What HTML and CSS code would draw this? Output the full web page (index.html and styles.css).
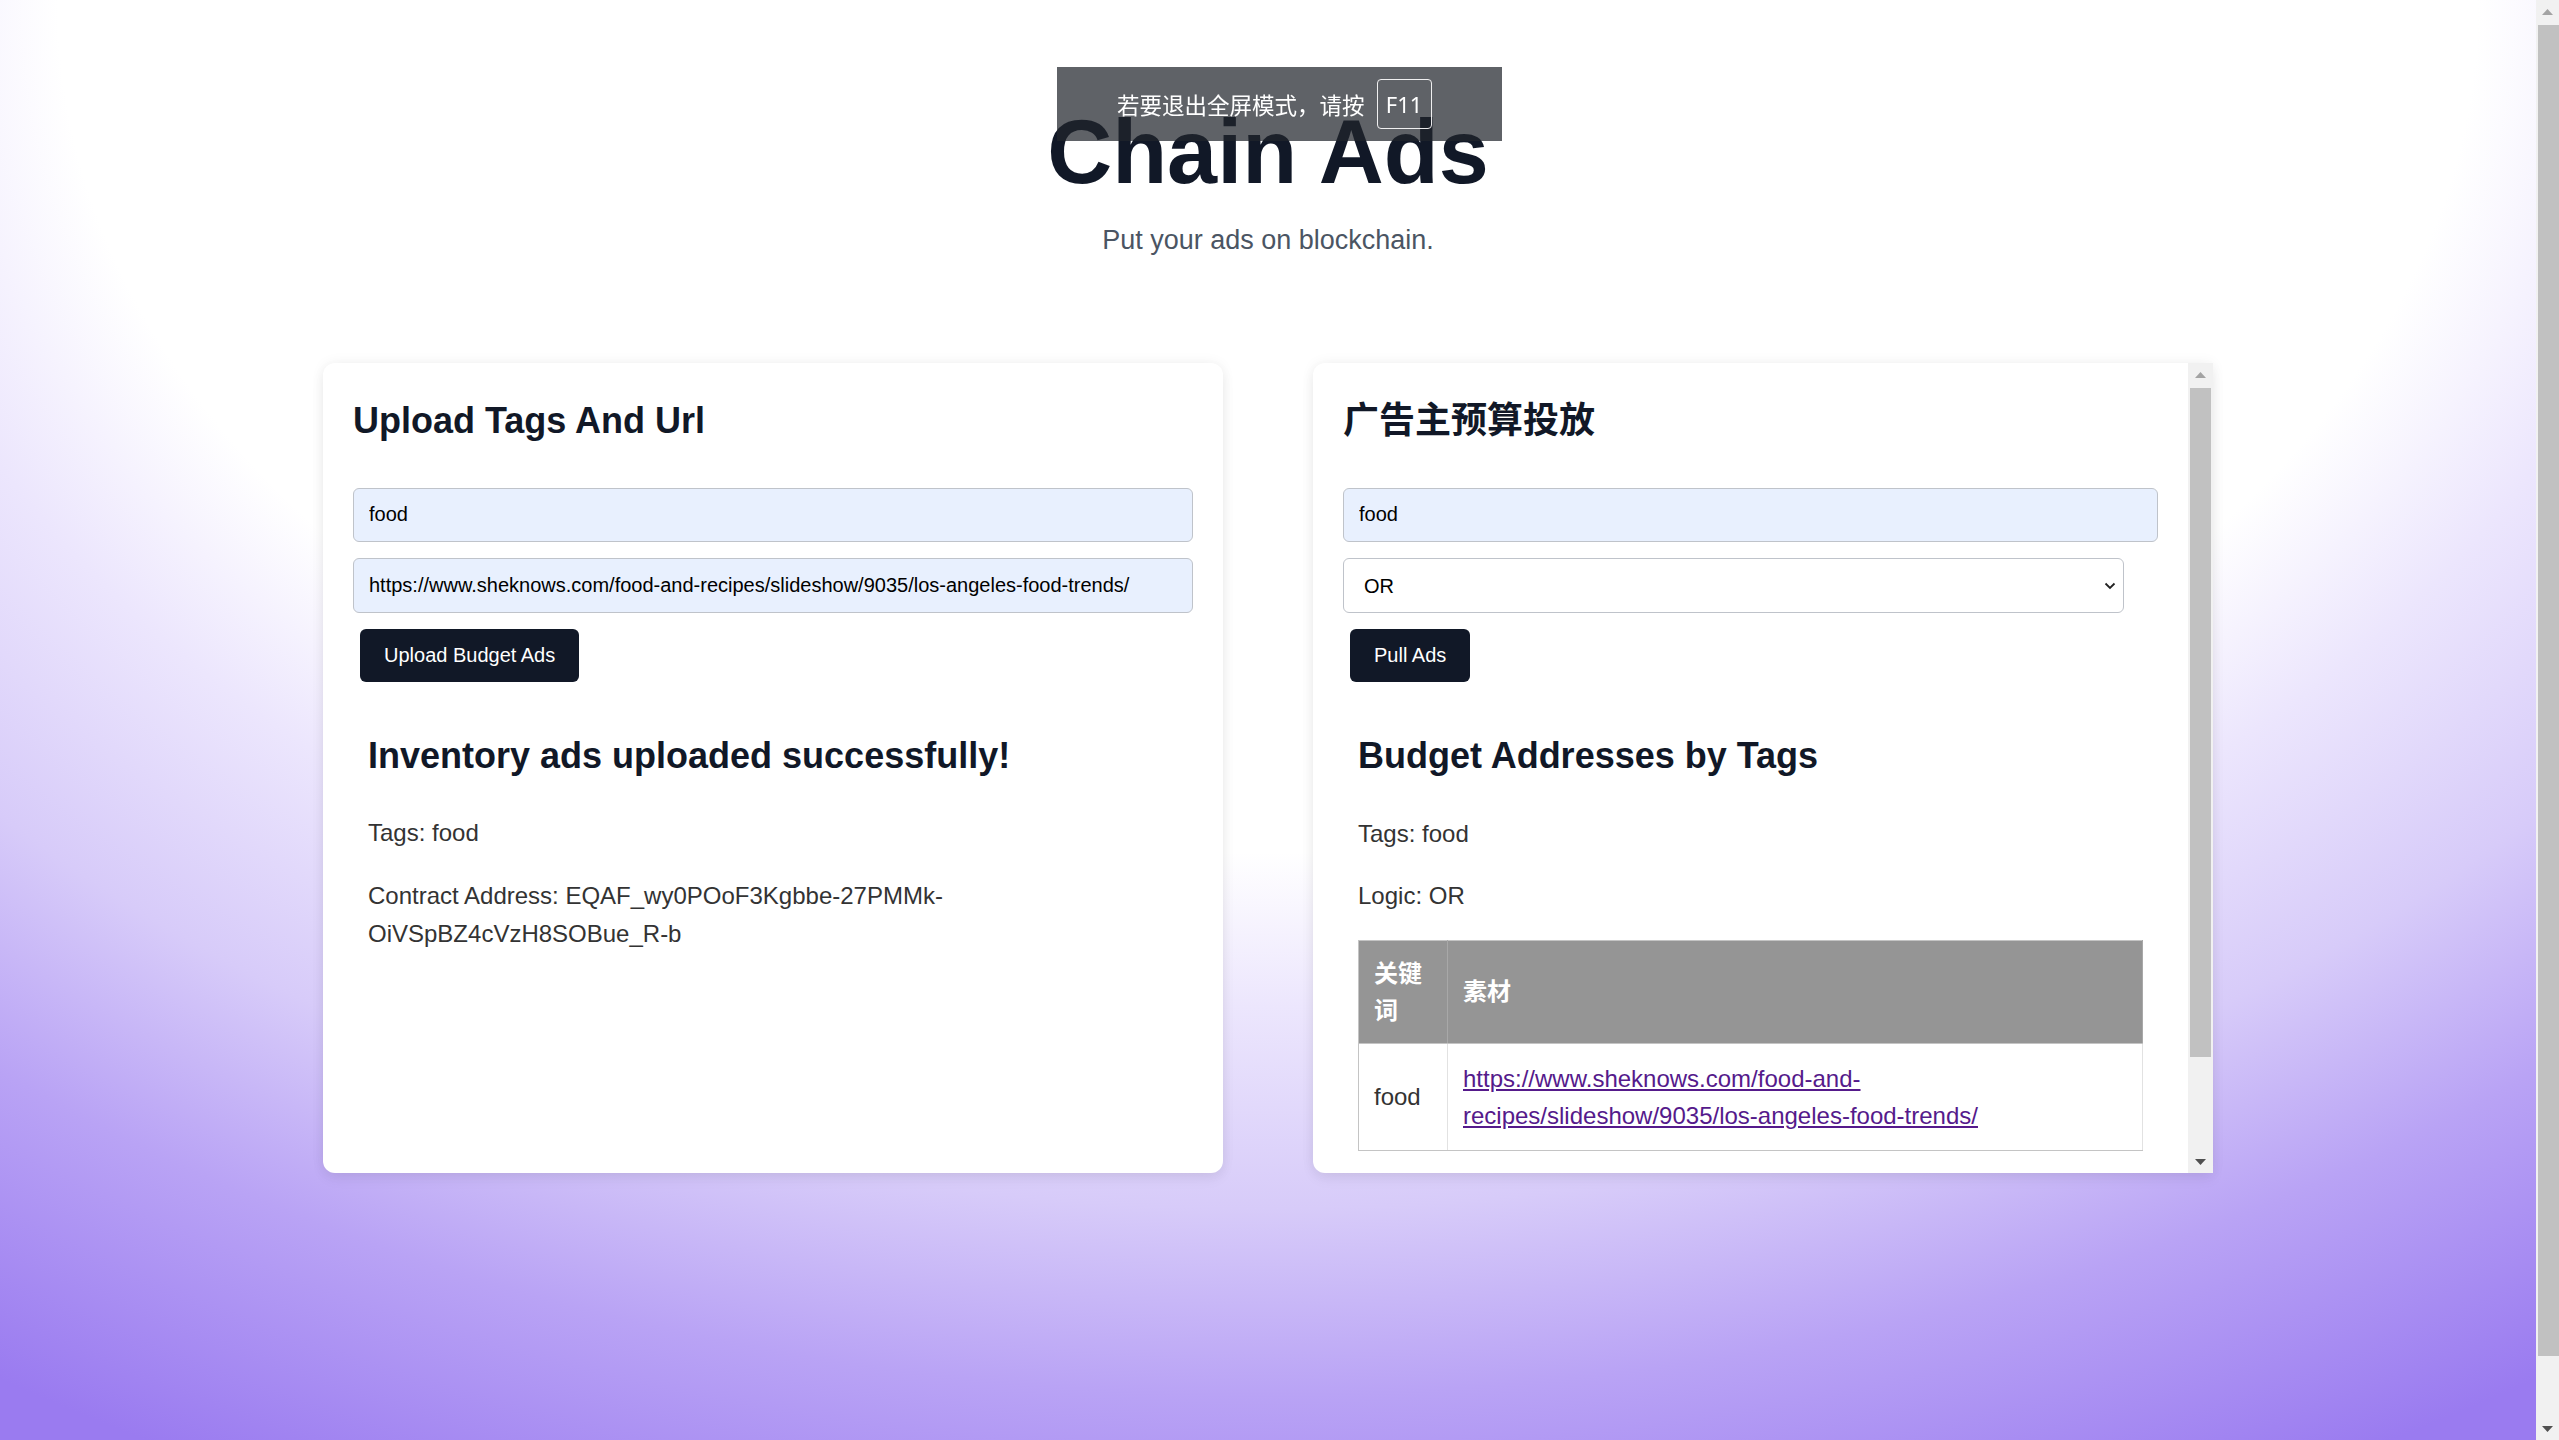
FILE: index.html
```html
<!DOCTYPE html>
<html lang="en">
<head>
<meta charset="utf-8">
<title>Chain Ads</title>
<link rel="stylesheet" href="styles.css">
</head>
<body>
<div class="page">
  <header class="hero">
    <h1 class="hero-title">Chain Ads</h1>
    <p class="hero-sub">Put your ads on blockchain.</p>
  </header>

  <main class="cards">
    <section class="card">
      <h2 class="card-title">Upload Tags And Url</h2>
      <div class="form">
        <input class="field" type="text" value="food">
        <input class="field" type="text" value="https://www.sheknows.com/food-and-recipes/slideshow/9035/los-angeles-food-trends/">
        <button class="btn" type="button">Upload Budget Ads</button>
      </div>
      <div class="result">
        <h2 class="result-title">Inventory ads uploaded successfully!</h2>
        <p class="result-text">Tags: food</p>
        <p class="result-text">Contract Address: EQAF_wy0POoF3Kgbbe-27PMMk-OiVSpBZ4cVzH8SOBue_R-b</p>
      </div>
    </section>

    <section class="card card-split">
      <div class="card-body">
        <h2 class="card-title">广告主预算投放</h2>
        <div class="form">
          <input class="field" type="text" value="food">
          <div class="select-wrap">
            <select class="select">
              <option>OR</option>
              <option>AND</option>
            </select>
            <svg class="select-chevron" width="12" height="8" viewBox="0 0 12 8"><path d="M1.5 1.5 L6 6 L10.5 1.5" fill="none" stroke="#222" stroke-width="1.8"/></svg>
          </div>
          <button class="btn" type="button">Pull Ads</button>
        </div>
        <div class="result">
          <h2 class="result-title">Budget Addresses by Tags</h2>
          <p class="result-text">Tags: food</p>
          <p class="result-text">Logic: OR</p>
          <table class="ads-table">
            <thead>
              <tr>
                <th class="col-key">关键词</th>
                <th>素材</th>
              </tr>
            </thead>
            <tbody>
              <tr>
                <td class="col-key">food</td>
                <td><a class="ad-link" href="#">https://www.sheknows.com/food-and-recipes/slideshow/9035/los-angeles-food-trends/</a></td>
              </tr>
            </tbody>
          </table>
        </div>
      </div>
      <div class="vscroll vscroll-card">
        <span class="vscroll-btn">
          <svg width="11" height="6" viewBox="0 0 11 6"><path d="M0 6 L5.5 0 L11 6 Z" fill="#a3a3a3"/></svg>
        </span>
        <span class="vscroll-track"><span class="vscroll-thumb thumb-card"></span></span>
        <span class="vscroll-btn">
          <svg width="11" height="6" viewBox="0 0 11 6"><path d="M0 0 L11 0 L5.5 6 Z" fill="#505050"/></svg>
        </span>
      </div>
    </section>
  </main>
</div>

<div class="vscroll page-scroll">
  <span class="vscroll-btn">
    <svg width="11" height="6" viewBox="0 0 11 6"><path d="M0 6 L5.5 0 L11 6 Z" fill="#a3a3a3"/></svg>
  </span>
  <span class="vscroll-track"><span class="vscroll-thumb thumb-page"></span></span>
  <span class="vscroll-btn">
    <svg width="11" height="6" viewBox="0 0 11 6"><path d="M0 0 L11 0 L5.5 6 Z" fill="#505050"/></svg>
  </span>
</div>

<div class="fs-bubble">
  <span class="fs-text">若要退出全屏模式，请按</span>
  <span class="fs-key">F11</span>
</div>
</body>
</html>
```

FILE: styles.css
```css
html {
  background: radial-gradient(ellipse 2200px 1550px at 1268px 0px,
    #ffffff 0%, #ffffff 55%, #ece6fd 65%, #d7cbf9 78%, #b9a3f5 90%, #9a7bf0 106%);
  background-color: #ffffff;
  overflow: hidden;
}

body {
  margin: 0;
  font-family: "Liberation Sans", Arial, "Noto Sans CJK SC", sans-serif;
  line-height: 1.6;
  color: #333333;
}

.page {
  margin-right: 23px;
  padding: 107px 0 335px;
}

.hero {
  text-align: center;
}

.hero-title {
  margin: 0;
  font-size: 90px;
  line-height: 90px;
  font-weight: 700;
  color: #111827;
}

.hero-sub {
  margin: 22px 0 0;
  font-size: 27px;
  line-height: 42px;
  color: #4b5563;
}

.cards {
  width: 1890px;
  margin: 102px auto 0;
  display: grid;
  grid-template-columns: 900px 900px;
  column-gap: 90px;
}

.card {
  box-sizing: border-box;
  height: 810px;
  padding: 29px 30px 30px;
  background: #ffffff;
  border-radius: 12px;
  box-shadow: 0 0 14px rgba(0, 0, 0, 0.06), 0 6px 14px rgba(0, 0, 0, 0.05);
}

.card-split {
  display: flex;
  padding: 0;
  overflow: hidden;
  border-radius: 12px 0 0 12px;
}

.card-body {
  flex: 1;
  min-width: 0;
  padding: 29px 30px 0;
  overflow: hidden;
}

.card-title {
  margin: 0;
  font-size: 36px;
  line-height: 57.6px;
  font-weight: 700;
  color: #111827;
}

.form {
  margin-top: 38px;
  display: flex;
  flex-direction: column;
  gap: 16px;
}

.field {
  display: block;
  box-sizing: border-box;
  width: 100%;
  height: 54.5px;
  margin: 0;
  padding: 0 15px;
  font-family: "Liberation Sans", Arial, sans-serif;
  font-size: 20px;
  color: #000000;
  background: #e8f0fe;
  border: 1.5px solid #bfc3ca;
  border-radius: 6px;
  outline: none;
}

.select-wrap {
  position: relative;
  width: calc(100% - 34px);
}

.select {
  display: block;
  box-sizing: border-box;
  width: 100%;
  height: 55px;
  margin: 0;
  padding: 0 40px 0 20px;
  font-family: "Liberation Sans", Arial, sans-serif;
  font-size: 20px;
  color: #000000;
  background: #ffffff;
  border: 1.5px solid #bfc3ca;
  border-radius: 6px;
  appearance: none;
  -webkit-appearance: none;
  outline: none;
}

.select-chevron {
  position: absolute;
  right: 8px;
  top: 24px;
  pointer-events: none;
}

.btn {
  align-self: flex-start;
  margin-left: 7px;
  height: 53px;
  padding: 0 24px;
  font-family: "Liberation Sans", Arial, sans-serif;
  font-size: 20px;
  color: #ffffff;
  background: #111827;
  border: none;
  border-radius: 6px;
}

.result {
  padding: 15px;
}

.result-title {
  margin: 30px 0;
  font-size: 36px;
  line-height: 57.6px;
  font-weight: 700;
  color: #111827;
}

.result-text {
  margin: 24px 0;
  font-size: 24px;
  line-height: 38.4px;
  color: #333333;
}

.ads-table {
  width: 100%;
  border-collapse: collapse;
  border: 1.5px solid #c4c4c4;
  font-size: 24px;
  line-height: 37px;
}

.ads-table th {
  padding: 14px 15px;
  text-align: left;
  font-weight: 700;
  color: #ffffff;
  background: #959595;
  border: 1.5px solid #c4c4c4;
  border-right-color: #a8a8a8;
}

.ads-table td {
  padding: 16px 15px;
  color: #333333;
  border: 1.5px solid #c4c4c4;
  border-right-color: #e2e2e2;
}

.ads-table .col-key {
  width: 58px;
}

.ad-link {
  color: #551a8b;
  text-decoration: underline;
}

/* scrollbars (drawn) */
.vscroll {
  display: flex;
  flex-direction: column;
  background: #f1f1f1;
}

.vscroll-card {
  flex: 0 0 25px;
}

.page-scroll {
  position: fixed;
  top: 0;
  right: 0;
  bottom: 0;
  width: 23px;
}

.vscroll-btn {
  flex: 0 0 23px;
  display: flex;
  align-items: center;
  justify-content: center;
}

.vscroll-track {
  flex: 1;
  display: flex;
  flex-direction: column;
}

.vscroll-thumb {
  display: block;
  background: #c1c1c1;
}

.thumb-card {
  margin: 1.5px 2px 0;
  height: 669px;
}

.thumb-page {
  margin: 2px 0 0 2px;
  height: 1331px;
}

.fs-bubble {
  position: fixed;
  top: 67px;
  left: 1057px;
  box-sizing: border-box;
  width: 445px;
  height: 74px;
  padding-left: 60px;
  display: flex;
  align-items: center;
  gap: 12px;
  background: rgba(33, 38, 45, 0.72);
  color: #ffffff;
  font-family: "Noto Sans CJK SC", sans-serif;
  font-size: 22.5px;
  line-height: 1;
}

.fs-text {
  white-space: nowrap;
}

.fs-key {
  box-sizing: border-box;
  width: 55px;
  height: 50px;
  display: flex;
  align-items: center;
  justify-content: center;
  border: 1.5px solid rgba(255, 255, 255, 0.9);
  border-radius: 4px;
  font-family: "Noto Sans", sans-serif;
  font-size: 22px;
}
```
